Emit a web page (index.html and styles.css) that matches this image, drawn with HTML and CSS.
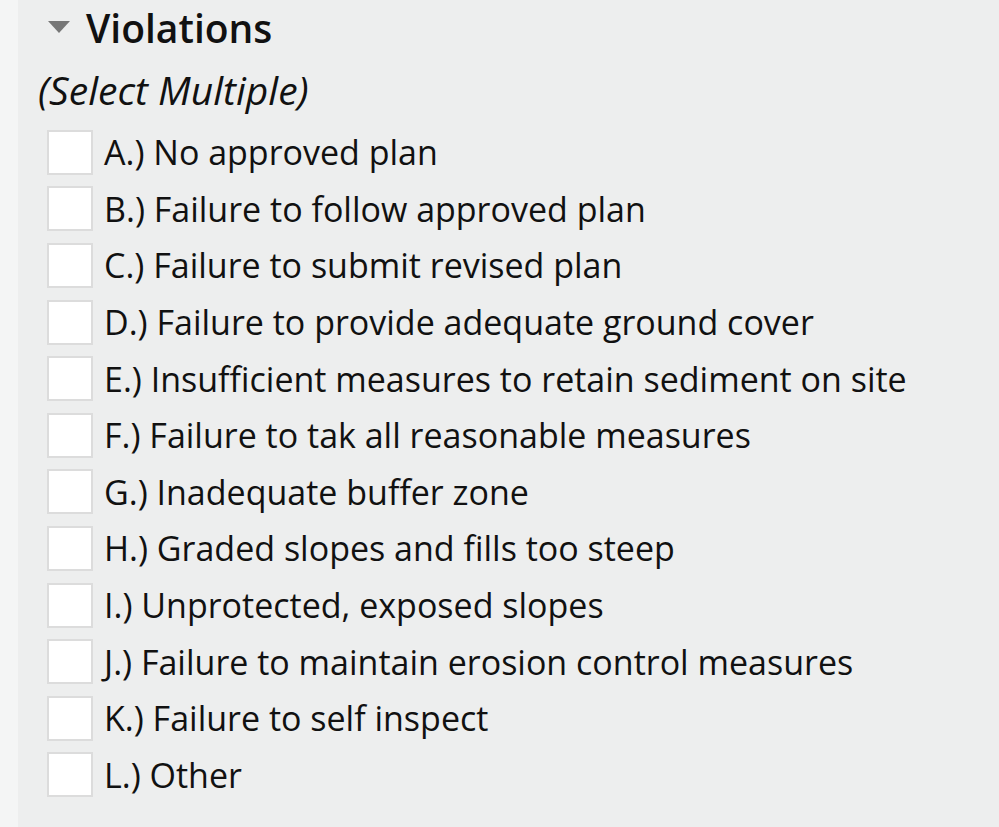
FILE: index.html
```html
<!DOCTYPE html>
<html lang="en">
<head>
    <meta charset="UTF-8">
    <title>Violations</title>
    <link rel="stylesheet" href="styles.css">
</head>
<body>
    <div class="panel">
        <div class="group-head">
            <span class="caret"></span>
            <h2>Violations</h2>
        </div>
        <p class="hint">(Select Multiple)</p>
        <ul class="choices">
            <li><span class="box"></span>A.) No approved plan</li>
            <li><span class="box"></span>B.) Failure to follow approved plan</li>
            <li><span class="box"></span>C.) Failure to submit revised plan</li>
            <li><span class="box"></span>D.) Failure to provide adequate ground cover</li>
            <li><span class="box"></span>E.) Insufficient measures to retain sediment on site</li>
            <li><span class="box"></span>F.) Failure to tak all reasonable measures</li>
            <li><span class="box"></span>G.) Inadequate buffer zone</li>
            <li><span class="box"></span>H.) Graded slopes and fills too steep</li>
            <li><span class="box"></span>I.) Unprotected, exposed slopes</li>
            <li><span class="box"></span>J.) Failure to maintain erosion control measures</li>
            <li><span class="box"></span>K.) Failure to self inspect</li>
            <li><span class="box"></span>L.) Other</li>
        </ul>
    </div>
</body>
</html>
```

FILE: styles.css
```css
body {
    background-color: #f4f5f5;
    color: #111;
    font-family: "Open Sans", Lato, sans-serif;
    margin: 0;
    padding-left: 18px;
    height: 827px;
    overflow: hidden;
}

.panel {
    background-color: #edeeee;
    height: 100%;
    padding-left: 20px;
}

.group-head {
    display: flex;
    align-items: center;
    gap: 16px;
    padding-left: 10px;
    height: 54px;
}

.caret {
    width: 0;
    height: 0;
    border-left: 11px solid transparent;
    border-right: 11px solid transparent;
    border-top: 12px solid #777;
}

h2 {
    margin: 0;
    font-size: 39px;
    font-weight: 600;
}

.hint {
    margin: 14px 0 0;
    font-size: 39px;
    font-style: italic;
    line-height: 44px;
}

.choices {
    list-style: none;
    margin: 0;
    padding: 12px 0 0 9px;
}

.choices li {
    display: flex;
    align-items: center;
    gap: 11px;
    height: 56.6px;
    font-size: 34px;
}

.box {
    width: 42px;
    height: 41px;
    background-color: #fff;
    border: 2px solid #dcdcdc;
    flex: none;
}
```
